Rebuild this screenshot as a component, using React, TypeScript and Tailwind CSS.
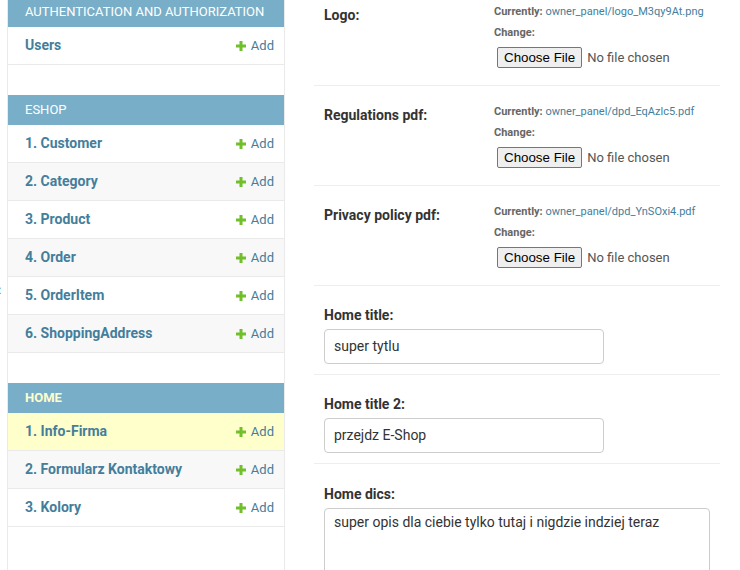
import React from "react";

const font = "font-['Roboto','Noto_Sans',sans-serif]";

function Plus() {
  return (
    <svg width="10" height="10" viewBox="0 0 10 10" className="shrink-0">
      <rect x="3.5" y="0" width="3" height="10" fill="#70bf2b" />
      <rect x="0" y="3.5" width="10" height="3" fill="#70bf2b" />
    </svg>
  );
}

function Row({ name, alt, selected }: { name: string; alt?: boolean; selected?: boolean }) {
  const bg = selected ? "bg-[#ffffcc]" : alt ? "bg-[#f8f8f8]" : "bg-white";
  return (
    <div className={`h-[38px] border-b border-[#eaeaea] flex items-center justify-between pl-[17px] pr-[10px] ${bg}`}>
      <span className="text-[14px] font-bold text-[#447e9b]">{name}</span>
      <span className="flex items-center gap-[5px] text-[13px] text-[#447e9b]">
        <Plus />
        Add
      </span>
    </div>
  );
}

function Caption({ text, current }: { text: string; current?: boolean }) {
  return (
    <div
      className={`h-[30px] bg-[#79aec8] flex items-center pl-[17px] text-[13px] uppercase ${
        current ? "text-[#ffffcc] font-bold" : "text-white"
      }`}
    >
      {text}
    </div>
  );
}

function FileRow({ label, file }: { label: string; file: string }) {
  return (
    <div className="h-[100px] border-b border-[#eee] flex pl-[10px]">
      <div className="w-[170px] pt-[21px] leading-[16px] text-[14px] font-bold text-[#333]">{label}</div>
      <div className="pt-[19px]">
        <div className="leading-[14px] text-[11px]">
          <span className="font-bold text-[#666]">Currently:</span>{" "}
          <span className="text-[#447e9b]">{file}</span>
        </div>
        <div className="mt-[7px] leading-[14px] text-[11px] font-bold text-[#666]">Change:</div>
        <div className="mt-[7px] ml-[3px] flex items-center font-['Liberation_Sans',Arial,sans-serif] text-[13.33px]">
          <span className="h-[21px] px-[6px] flex items-center border border-[#767676] rounded-[2px] bg-[#efefef] text-black">
            Choose File
          </span>
          <span className="ml-[5px] text-[#555] font-['Roboto',sans-serif] text-[13px]">No file chosen</span>
        </div>
      </div>
    </div>
  );
}

function TextRow({ label, value }: { label: string; value: string }) {
  return (
    <div className="border-b border-[#eee] pl-[10px] pt-[21px] pb-[10px]">
      <div className="leading-[16px] text-[14px] font-bold text-[#333]">{label}</div>
      <div className="mt-[6px] w-[280px] h-[35px] border border-[#ccc] rounded-[4px] flex items-center px-[9px] text-[14px] text-[#333]">
        {value}
      </div>
    </div>
  );
}

export default function App() {
  return (
    <div className={`${font} w-[740px] h-[570px] overflow-hidden bg-white flex`}>
      <div className="w-[8px] shrink-0 border-r border-[#eaeaea] overflow-hidden pt-[282px]">
        <span className="block -ml-[6px] text-[16px] leading-[16px] text-[#447e9b]">«</span>
      </div>
      <div className="w-[277px] shrink-0 border-r border-[#eaeaea] -mt-[3px]">
        <Caption text="Authentication and Authorization" />
        <Row name="Users" />
        <div className="h-[30px]" />
        <Caption text="Eshop" />
        <Row name="1. Customer" />
        <Row name="2. Category" alt />
        <Row name="3. Product" />
        <Row name="4. Order" alt />
        <Row name="5. OrderItem" />
        <Row name="6. ShoppingAddress" alt />
        <div className="h-[30px]" />
        <Caption text="Home" current />
        <Row name="1. Info-Firma" selected />
        <Row name="2. Formularz Kontaktowy" alt />
        <Row name="3. Kolory" />
      </div>
      <div className="flex-1 pl-[29px] pr-[20px] -mt-[14px]">
        <FileRow label="Logo:" file="owner_panel/logo_M3qy9At.png" />
        <FileRow label="Regulations pdf:" file="owner_panel/dpd_EqAzlc5.pdf" />
        <FileRow label="Privacy policy pdf:" file="owner_panel/dpd_YnSOxi4.pdf" />
        <TextRow label="Home title:" value="super tytlu" />
        <TextRow label="Home title 2:" value="przejdz E-Shop" />
        <div className="pl-[10px] pt-[22px]">
          <div className="leading-[16px] text-[14px] font-bold text-[#333]">Home dics:</div>
          <div className="mt-[6px] w-[386px] h-[140px] border border-[#ccc] rounded-[4px] px-[9px] py-[5px] leading-[16px] text-[14px] text-[#333]">
            super opis dla ciebie tylko tutaj i nigdzie indziej teraz
          </div>
        </div>
      </div>
    </div>
  );
}
